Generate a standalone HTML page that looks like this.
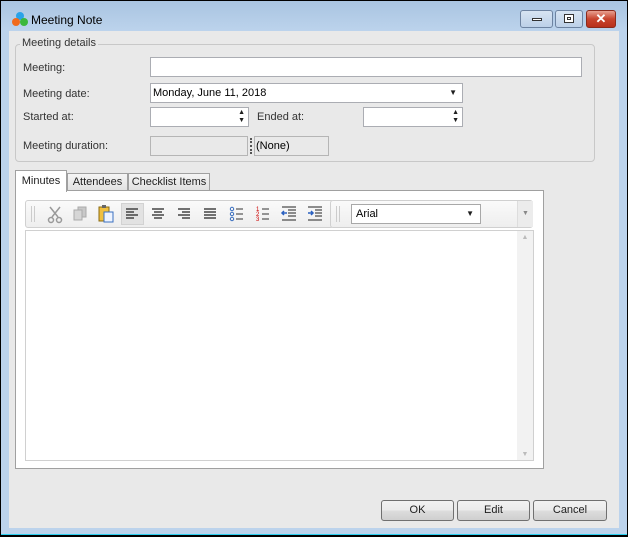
<!DOCTYPE html>
<html><head><meta charset="utf-8"><style>
*{box-sizing:border-box;margin:0;padding:0}
body{width:628px;height:537px;overflow:hidden;background:#000;font-family:"Liberation Sans",sans-serif;font-size:11px;color:#1e1e1e;position:relative}
.a{position:absolute;white-space:nowrap}
.win{left:1px;top:1px;width:626px;height:534px;background:linear-gradient(#a9c4e1 0,#bcd3ec 30px,#bcd3ec);border-bottom:1px solid #2bd0f0}
.client{left:9px;top:31px;width:610px;height:497px;background:#e9e9e9}
.lbl{font-size:11px;color:#333}
.inp{background:#fff;border:1px solid #abadb3}
.dis{background:#e9e9e9;border:1px solid #b5b5b5}
.btn{border:1px solid #707070;border-radius:3px;background:linear-gradient(#f2f2f2,#ebebeb 50%,#dddddd 51%,#cfcfcf);text-align:center;line-height:19px;font-size:11px}
.tab{border:1px solid #a0a0a0;border-bottom:none;background:linear-gradient(#f5f5f5,#e0e0e0);text-align:center;line-height:17px;font-size:11px}
.wb{top:10px;height:18px;border:1px solid #6d83a1;border-radius:3px;background:linear-gradient(#d7e4f2,#bcd0e8)}
</style></head><body>
<div class="a win"></div>
<svg class="a" style="left:11px;top:11px" width="18" height="16"><circle cx="9" cy="5" r="4" fill="#2aa3e8"/><circle cx="5" cy="11" r="4" fill="#f06a1c"/><circle cx="13" cy="11" r="4" fill="#3cb83c"/></svg>
<div class="a" style="left:31px;top:13px;font-size:12px;color:#000">Meeting Note</div>
<div class="a wb" style="left:520px;width:33px"><div class="a" style="left:11px;top:7px;width:10px;height:3px;background:#fff;border:1px solid #333"></div></div>
<div class="a wb" style="left:555px;width:28px"><div class="a" style="left:8px;top:3px;width:10px;height:9px;border:1px solid #333;background:#fff"></div><div class="a" style="left:11px;top:6px;width:4px;height:3px;border:1px solid #333"></div></div>
<div class="a wb" style="left:586px;width:30px;border-color:#8b2a1c;background:linear-gradient(#e8a090,#c8442e 50%,#b8301c)"><div class="a" style="left:0;top:-1px;width:28px;text-align:center;color:#fff;font-weight:bold;font-size:13px;line-height:18px">✕</div></div>
<div class="a client"></div>
<div class="a" style="left:15px;top:44px;width:580px;height:118px;border:1px solid #c8c8c8;border-radius:4px"></div>
<div class="a lbl" style="left:20px;top:37px;background:#e9e9e9;padding:0 2px">Meeting details</div>
<div class="a lbl" style="left:23px;top:62px">Meeting:</div>
<div class="a lbl" style="left:23px;top:88px">Meeting date:</div>
<div class="a lbl" style="left:23px;top:111px">Started at:</div>
<div class="a lbl" style="left:23px;top:140px">Meeting duration:</div>
<div class="a inp" style="left:150px;top:57px;width:432px;height:20px"></div>
<div class="a inp" style="left:150px;top:83px;width:313px;height:20px"><span class="a" style="left:2px;top:3px;color:#000">Monday, June 11, 2018</span><span class="a" style="right:5px;top:4px;font-size:8px">▼</span></div>
<div class="a inp" style="left:150px;top:107px;width:99px;height:20px"><span class="a" style="right:3px;top:1px;font-size:7px;line-height:8px">▲<br>▼</span></div>
<div class="a lbl" style="left:257px;top:111px">Ended at:</div>
<div class="a inp" style="left:363px;top:107px;width:100px;height:20px"><span class="a" style="right:3px;top:1px;font-size:7px;line-height:8px">▲<br>▼</span></div>
<div class="a dis" style="left:150px;top:136px;width:98px;height:20px"></div>
<div class="a" style="left:250px;top:138px;width:2px;height:16px;border-left:2px dotted #555"></div>
<div class="a dis" style="left:254px;top:136px;width:75px;height:20px"><span class="a" style="left:1px;top:3px;color:#000">(None)</span></div>
<div class="a tab" style="left:67px;top:173px;width:61px;height:18px">Attendees</div>
<div class="a tab" style="left:128px;top:173px;width:82px;height:18px">Checklist Items</div>
<div class="a" style="left:15px;top:190px;width:529px;height:279px;border:1px solid #a0a0a0;background:#fff"></div>
<div class="a tab" style="left:15px;top:170px;width:52px;height:22px;background:#fff;line-height:20px">Minutes</div>
<div class="a" style="left:25px;top:200px;width:309px;height:28px;border:1px solid #d0d0d0;border-radius:3px;background:linear-gradient(#fafafa,#eeeeee)"></div>
<div class="a" style="left:330px;top:200px;width:203px;height:28px;border:1px solid #d0d0d0;border-radius:3px;background:linear-gradient(#fafafa,#eeeeee)"></div>
<div class="a" style="left:517px;top:201px;width:16px;height:26px;border-left:1px solid #ddd;background:#ececec;font-size:7px;color:#888;text-align:center;line-height:26px">▼</div>
<div class="a" style="left:31px;top:206px;width:4px;height:16px;border-left:1px solid #ccc;border-right:1px solid #ccc"></div>
<div class="a" style="left:336px;top:206px;width:4px;height:16px;border-left:1px solid #ccc;border-right:1px solid #ccc"></div>
<div class="a" style="left:121px;top:203px;width:23px;height:22px;background:#e2e2e2;border:1px solid #d2d2d2"></div>
<svg class="a" style="left:25px;top:200px" width="310" height="28">
<g stroke="#999" fill="none" stroke-width="1.5"><path d="M25 7l8 10M35 7l-8 10"/><circle cx="26" cy="20" r="2.5"/><circle cx="34" cy="20" r="2.5"/></g>
<rect x="53" y="7" width="8" height="10" fill="#c8c8c8" stroke="#aaa"/><rect x="49" y="10" width="8" height="10" fill="#d6d6d6" stroke="#aaa"/>
<rect x="74" y="7" width="10" height="14" fill="#f0c040" stroke="#8a6a10"/><rect x="77" y="5" width="4" height="3" fill="#666"/><rect x="79" y="12" width="9" height="10" fill="#eef4ff" stroke="#3a70c0"/>
<g stroke="#222" stroke-width="1.2"><path d="M101 9h12M101 12h8M101 15h12M101 18h8"/>
<path d="M127 9h12M129 12h8M127 15h12M129 18h8"/>
<path d="M153 9h12M157 12h8M153 15h12M157 18h8"/>
<path d="M179 9h12M179 12h12M179 15h12M179 18h12"/></g>
<g fill="none" stroke="#3a6fc0"><circle cx="207" cy="9" r="1.7"/><circle cx="207" cy="14" r="1.7"/><circle cx="207" cy="19" r="1.7"/></g>
<g stroke="#333"><path d="M211 9h7M211 14h7M211 19h7M237 9h7M237 14h7M237 19h7"/></g>
<text x="231" y="11" font-size="6" fill="#c00" font-family="Liberation Sans">1</text><text x="231" y="16" font-size="6" fill="#c00" font-family="Liberation Sans">2</text><text x="231" y="21" font-size="6" fill="#c00" font-family="Liberation Sans">3</text>
<g stroke="#222"><path d="M257 7h14M263 10h8M263 13h8M263 16h8M257 20h14M283 7h14M290 10h7M290 13h7M290 16h7M283 20h14"/></g>
<path d="M257 13h5M259 11l-2 2 2 2" stroke="#2a60c0" stroke-width="1.5" fill="none"/>
<path d="M283 13h5M286 11l2 2-2 2" stroke="#2a60c0" stroke-width="1.5" fill="none"/>
</svg>
<div class="a inp" style="left:351px;top:204px;width:130px;height:20px;border-color:#a8a8a8"><span class="a" style="left:4px;top:3px;color:#000">Arial</span><span class="a" style="right:6px;top:4px;font-size:8px">▼</span></div>
<div class="a" style="left:25px;top:230px;width:509px;height:231px;border:1px solid #d0d0d0;background:#fff"></div>
<div class="a" style="left:517px;top:231px;width:16px;height:229px;background:#f2f2f2;font-size:7px;color:#bbb;text-align:center"><div style="margin-top:3px">▲</div><div class="a" style="bottom:2px;left:0;width:16px">▼</div></div>
<div class="a btn" style="left:381px;top:500px;width:73px;height:21px">OK</div>
<div class="a btn" style="left:457px;top:500px;width:73px;height:21px">Edit</div>
<div class="a btn" style="left:533px;top:500px;width:74px;height:21px">Cancel</div>
</body></html>
